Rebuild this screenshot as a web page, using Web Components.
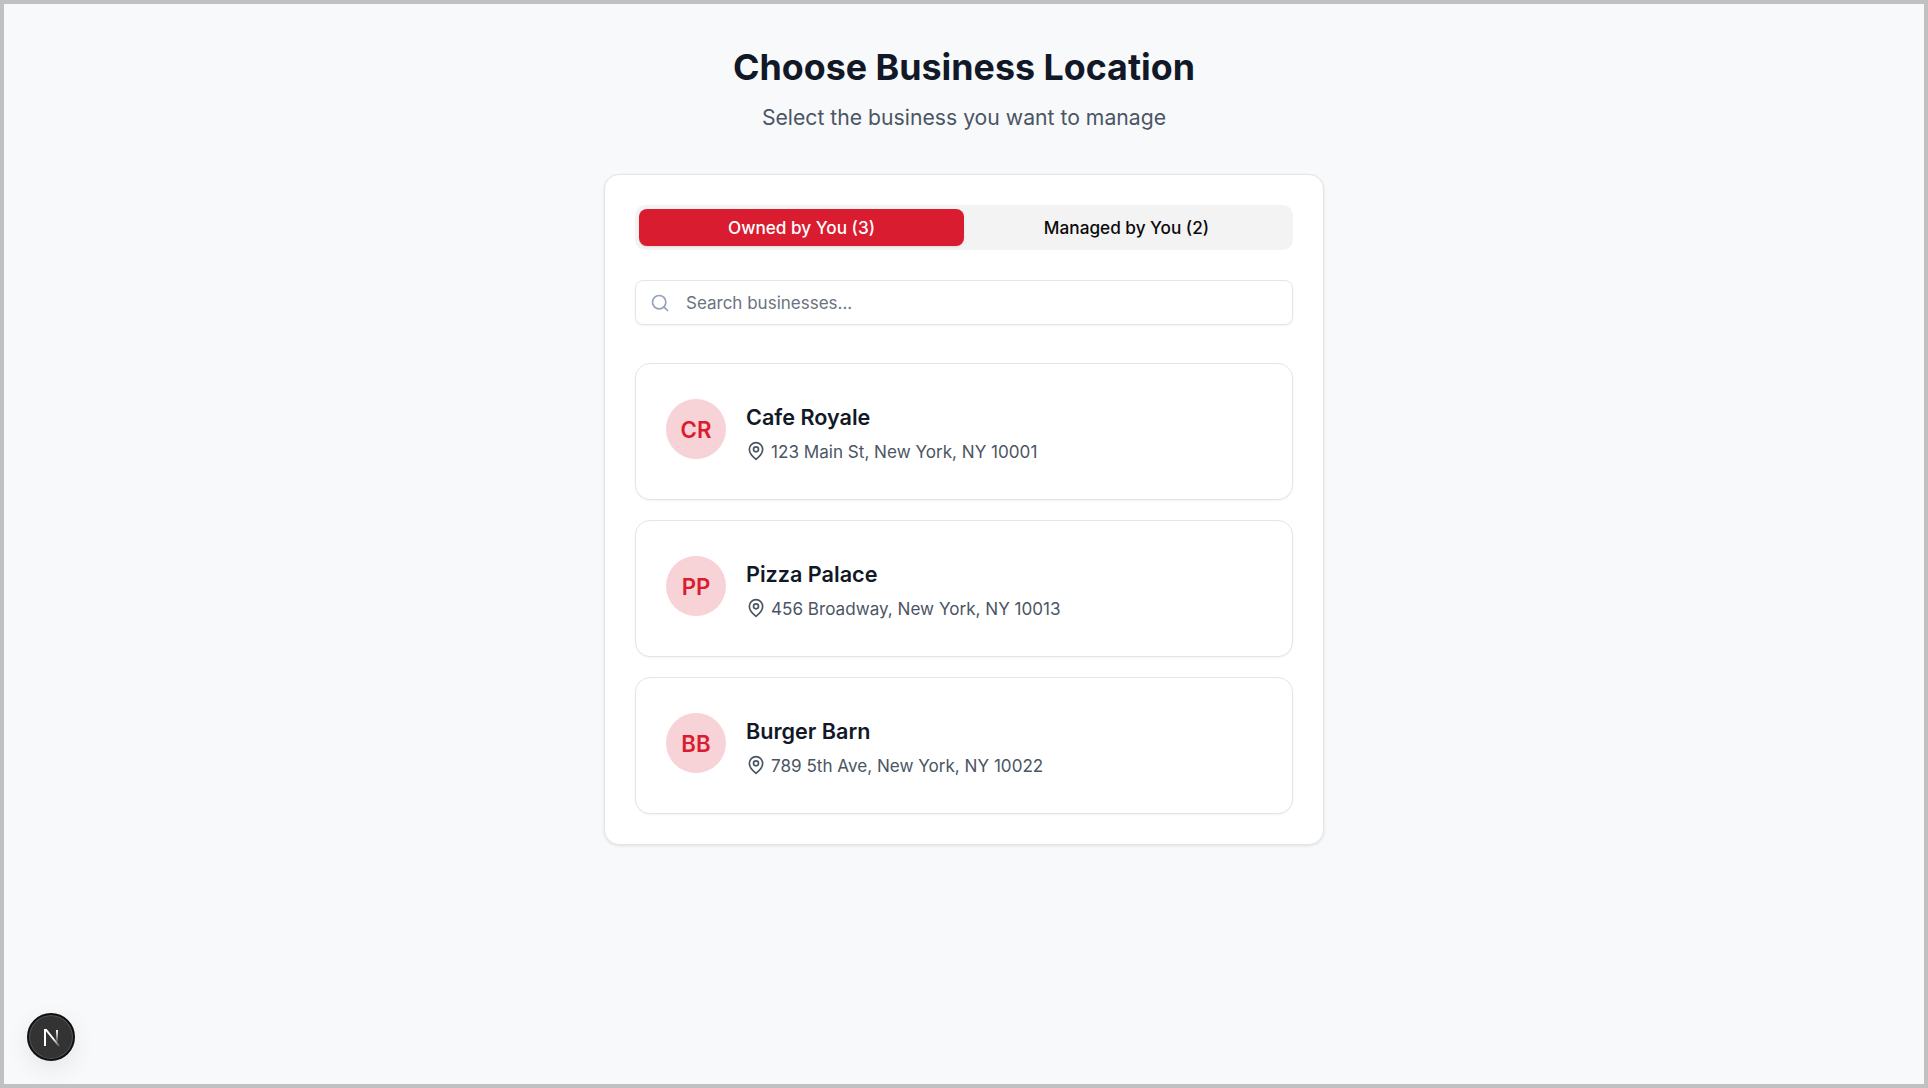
<!DOCTYPE html>
<html lang="en">
<head>
<meta charset="utf-8">
<title>Choose Business Location</title>
<style>
  html, body { margin: 0; height: 100%; }
  body { font-family: Inter, "Liberation Sans", sans-serif; }
</style>
</head>
<body>
<location-page>
  <span slot="title">Choose Business Location</span>
  <span slot="subtitle">Select the business you want to manage</span>
  <tab-switch>
    <tab-button active>Owned by You (3)</tab-button>
    <tab-button>Managed by You (2)</tab-button>
  </tab-switch>
  <search-box>Search businesses...</search-box>
  <business-row initials="CR" name="Cafe Royale" address="123 Main St, New York, NY 10001"></business-row>
  <business-row initials="PP" name="Pizza Palace" address="456 Broadway, New York, NY 10013"></business-row>
  <business-row initials="BB" name="Burger Barn" address="789 5th Ave, New York, NY 10022"></business-row>
</location-page>
<dev-badge></dev-badge>

<script>
// page frame, heading and the white card
class LocationPage extends HTMLElement {
  constructor() {
    super();
    this.attachShadow({ mode: "open" });
    this.shadowRoot.innerHTML = `
      <style>
        :host {
          display: flex;
          flex-direction: column;
          align-items: center;
          box-sizing: border-box;
          height: 1088px;
          border: 4px solid #c1c1c1;
          background: #f8f9fb;
          padding-top: 41px;
        }
        h1 {
          margin: 0;
          font-size: 35.8px;
          line-height: 44px;
          font-weight: 700;
          color: #111827;
        }
        p {
          margin: 12px 0 0;
          font-size: 21.2px;
          line-height: 32px;
          color: #4b5563;
        }
        .card {
          box-sizing: border-box;
          width: 720px;
          margin-top: 41px;
          padding: 30px;
          display: flex;
          flex-direction: column;
          background: #fff;
          border: 1px solid #e5e5e5;
          border-radius: 15px;
          box-shadow: 0 1px 3px rgba(0, 0, 0, 0.1);
        }
        .list {
          display: flex;
          flex-direction: column;
          gap: 20px;
          margin-top: 38px;
        }
      </style>
      <h1><slot name="title"></slot></h1>
      <p><slot name="subtitle"></slot></p>
      <div class="card">
        <slot name="controls"></slot>
        <div class="list"><slot></slot></div>
      </div>
    `;
  }
  connectedCallback() {
    this.querySelectorAll("tab-switch, search-box").forEach((el) => el.setAttribute("slot", "controls"));
  }
}
customElements.define("location-page", LocationPage);

class TabSwitch extends HTMLElement {
  constructor() {
    super();
    this.attachShadow({ mode: "open" });
    this.shadowRoot.innerHTML = `
      <style>
        :host {
          display: grid;
          grid-template-columns: 1fr 1fr;
          box-sizing: border-box;
          height: 45px;
          padding: 4px;
          background: #f3f3f4;
          border-radius: 10px;
        }
      </style>
      <slot></slot>
    `;
  }
}
customElements.define("tab-switch", TabSwitch);

class TabButton extends HTMLElement {
  constructor() {
    super();
    this.attachShadow({ mode: "open" });
    this.shadowRoot.innerHTML = `
      <style>
        :host {
          display: flex;
          align-items: center;
          justify-content: center;
          font-size: 17.2px;
          font-weight: 450;
          color: #0a0a0a;
          border-radius: 8px;
        }
        :host([active]) {
          background: #d91c30;
          color: #fff;
          box-shadow: 0 1px 2px rgba(0, 0, 0, 0.1);
        }
      </style>
      <slot></slot>
    `;
  }
}
customElements.define("tab-button", TabButton);

class SearchBox extends HTMLElement {
  constructor() {
    super();
    this.attachShadow({ mode: "open" });
    this.shadowRoot.innerHTML = `
      <style>
        :host {
          display: flex;
          align-items: center;
          gap: 16px;
          box-sizing: border-box;
          height: 45px;
          margin-top: 30px;
          padding: 0 15px;
          background: #fff;
          border: 1px solid #e5e5e5;
          border-radius: 8px;
          box-shadow: 0 1px 2px rgba(0, 0, 0, 0.05);
          font-size: 17px;
          color: #6b7280;
        }
        svg { width: 20px; height: 20px; flex: none; margin-left: -1px; }
      </style>
      <svg viewBox="0 0 24 24" fill="none" stroke="#94a3b8" stroke-width="2" stroke-linecap="round" stroke-linejoin="round">
        <circle cx="11" cy="11" r="8"></circle>
        <path d="m21 21-4.3-4.3"></path>
      </svg>
      <span><slot></slot></span>
    `;
  }
}
customElements.define("search-box", SearchBox);

const rowTemplate = document.createElement("template");
rowTemplate.innerHTML = `
  <style>
    :host {
      display: flex;
      align-items: center;
      gap: 20px;
      box-sizing: border-box;
      height: 137px;
      padding: 0 30px;
      background: #fff;
      border: 1px solid #e5e5e5;
      border-radius: 15px;
      box-shadow: 0 1px 2px rgba(0, 0, 0, 0.05);
    }
    .avatar {
      width: 60px;
      height: 60px;
      flex: none;
      display: flex;
      align-items: center;
      justify-content: center;
      border-radius: 50%;
      background: #f7d2d6;
      color: #d91c30;
      font-size: 22.2px;
      font-weight: 560;
      margin-top: -5px;
    }
    .text { padding-top: 3px; }
    .name {
      font-size: 21.6px;
      line-height: 30px;
      font-weight: 600;
      color: #111827;
    }
    .address {
      display: flex;
      align-items: center;
      gap: 5px;
      margin-top: 7px;
      font-size: 17.1px;
      line-height: 26px;
      color: #4b5563;
    }
    svg { width: 20px; height: 20px; flex: none; margin-top: -1px; }
  </style>
  <div class="avatar"></div>
  <div class="text">
    <div class="name"></div>
    <div class="address">
      <svg viewBox="0 0 24 24" fill="none" stroke="#4b5563" stroke-width="2" stroke-linecap="round" stroke-linejoin="round">
        <path d="M20 10c0 6-8 12-8 12s-8-6-8-12a8 8 0 0 1 16 0Z"></path>
        <circle cx="12" cy="10" r="3"></circle>
      </svg>
      <span></span>
    </div>
  </div>
`;

class BusinessRow extends HTMLElement {
  constructor() {
    super();
    this.attachShadow({ mode: "open" });
    this.shadowRoot.appendChild(rowTemplate.content.cloneNode(true));
    this.shadowRoot.querySelector(".avatar").textContent = this.getAttribute("initials");
    this.shadowRoot.querySelector(".name").textContent = this.getAttribute("name");
    this.shadowRoot.querySelector(".address span").textContent = this.getAttribute("address");
  }
}
customElements.define("business-row", BusinessRow);

// the round dev tools button in the corner
class DevBadge extends HTMLElement {
  constructor() {
    super();
    this.attachShadow({ mode: "open" });
    this.shadowRoot.innerHTML = `
      <style>
        :host {
          position: fixed;
          left: 27px;
          bottom: 27.5px;
          width: 48px;
          height: 48px;
          box-sizing: border-box;
          display: flex;
          align-items: center;
          justify-content: center;
          border-radius: 50%;
          background: #333;
          border: 2px solid #111;
          box-shadow: inset 0 0 0 1px #555, 0 8px 24px rgba(0, 0, 0, 0.08);
        }
        svg { width: 24px; height: 24px; }
      </style>
      <svg viewBox="0 0 24 24" fill="none">
        <defs>
          <linearGradient id="diag" x1="6" y1="5" x2="20" y2="21" gradientUnits="userSpaceOnUse">
            <stop offset="0.55" stop-color="#fff"></stop>
            <stop offset="1" stop-color="#fff" stop-opacity="0.2"></stop>
          </linearGradient>
          <linearGradient id="stem" x1="0" y1="5" x2="0" y2="17" gradientUnits="userSpaceOnUse">
            <stop offset="0" stop-color="#fff"></stop>
            <stop offset="1" stop-color="#fff" stop-opacity="0.1"></stop>
          </linearGradient>
        </defs>
        <path d="M6 21V5h1.2L20 21" stroke="url(#diag)" stroke-width="2"></path>
        <rect x="17" y="5" width="2" height="12" fill="url(#stem)"></rect>
      </svg>
    `;
  }
}
customElements.define("dev-badge", DevBadge);
</script>
</body>
</html>
